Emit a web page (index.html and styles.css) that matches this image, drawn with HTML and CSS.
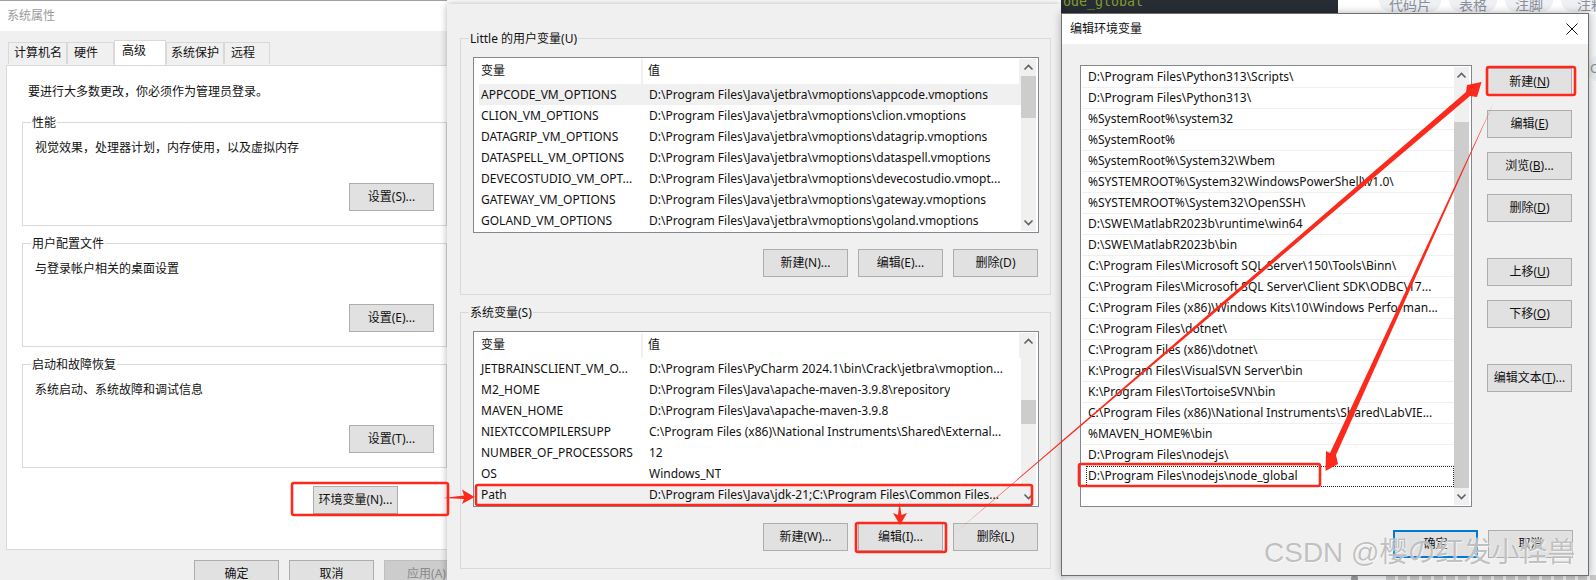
FILE: index.html
```html
<!DOCTYPE html>
<html lang="zh-CN">
<head>
<meta charset="utf-8">
<title>编辑环境变量</title>
<link rel="stylesheet" href="styles.css">
</head>
<body>
<div class="desktop">

  <div class="backdrop">
    <div class="bd-top">
      <div class="code"><span class="code-text">ode_global</span></div>
      <div class="bd-tools">
        <span class="chip c1">代码片</span>
        <span class="chip c2">表格</span>
        <span class="chip c2">注脚</span>
        <span class="chip c3">注释</span>
      </div>
    </div>
    <span class="side-chip">O</span>
    <div class="bd-bottom"><span class="dot"></span><span class="faint"></span></div>
  </div>

  <section class="window win-sys">
    <div class="titlebar inactive">系统属性</div>
    <div class="tabs">
      <span class="tab t1">计算机名</span>
      <span class="tab t2">硬件</span>
      <span class="tab t3 active">高级</span>
      <span class="tab t4">系统保护</span>
      <span class="tab t5">远程</span>
    </div>
    <div class="panel">
      <p class="note">要进行大多数更改，你必须作为管理员登录。</p>
      <div class="group">
        <span class="legend">性能</span>
        <p class="desc">视觉效果，处理器计划，内存使用，以及虚拟内存</p>
        <button class="btn group-btn">设置(S)...</button>
      </div>
      <div class="group">
        <span class="legend">用户配置文件</span>
        <p class="desc">与登录帐户相关的桌面设置</p>
        <button class="btn group-btn">设置(E)...</button>
      </div>
      <div class="group">
        <span class="legend">启动和故障恢复</span>
        <p class="desc">系统启动、系统故障和调试信息</p>
        <button class="btn group-btn">设置(T)...</button>
      </div>
      <button class="btn env-btn">环境变量(N)...</button>
    </div>
    <div class="sys-footer">
      <button class="btn">确定</button>
      <button class="btn">取消</button>
      <button class="btn disabled">应用(A)</button>
    </div>
  </section>

  <section class="window win-env">
    <div class="vgroup">
      <span class="vlegend">Little 的用户变量(U)</span>
      <div class="vlist">
        <div class="vtable">
          <div class="vhead"><span class="vh1">变量</span><span class="vh2">值</span></div>
          <div class="vrow selected"><span class="vname">APPCODE_VM_OPTIONS</span><span class="vval">D:\Program Files\Java\jetbra\vmoptions\appcode.vmoptions</span></div>
          <div class="vrow"><span class="vname">CLION_VM_OPTIONS</span><span class="vval">D:\Program Files\Java\jetbra\vmoptions\clion.vmoptions</span></div>
          <div class="vrow"><span class="vname">DATAGRIP_VM_OPTIONS</span><span class="vval">D:\Program Files\Java\jetbra\vmoptions\datagrip.vmoptions</span></div>
          <div class="vrow"><span class="vname">DATASPELL_VM_OPTIONS</span><span class="vval">D:\Program Files\Java\jetbra\vmoptions\dataspell.vmoptions</span></div>
          <div class="vrow"><span class="vname">DEVECOSTUDIO_VM_OPT...</span><span class="vval">D:\Program Files\Java\jetbra\vmoptions\devecostudio.vmopt...</span></div>
          <div class="vrow"><span class="vname">GATEWAY_VM_OPTIONS</span><span class="vval">D:\Program Files\Java\jetbra\vmoptions\gateway.vmoptions</span></div>
          <div class="vrow"><span class="vname">GOLAND_VM_OPTIONS</span><span class="vval">D:\Program Files\Java\jetbra\vmoptions\goland.vmoptions</span></div>
        </div>
        <div class="sbar">
          <svg class="chev" viewBox="0 0 15 17"><path d="M3.5 10.5 7.5 6.5 11.5 10.5"/></svg>
          <div class="thumb th-user"></div>
          <svg class="chev chev-end" viewBox="0 0 15 17"><path d="M3.5 6.5 7.5 10.5 11.5 6.5"/></svg>
        </div>
      </div>
      <div class="vbtns">
        <button class="btn">新建(N)...</button>
        <button class="btn">编辑(E)...</button>
        <button class="btn">删除(D)</button>
      </div>
    </div>

    <div class="vgroup">
      <span class="vlegend">系统变量(S)</span>
      <div class="vlist">
        <div class="vtable">
          <div class="vhead"><span class="vh1">变量</span><span class="vh2">值</span></div>
          <div class="vrow"><span class="vname">JETBRAINSCLIENT_VM_O...</span><span class="vval">D:\Program Files\PyCharm 2024.1\bin\Crack\jetbra\vmoption...</span></div>
          <div class="vrow"><span class="vname">M2_HOME</span><span class="vval">D:\Program Files\Java\apache-maven-3.9.8\repository</span></div>
          <div class="vrow"><span class="vname">MAVEN_HOME</span><span class="vval">D:\Program Files\Java\apache-maven-3.9.8</span></div>
          <div class="vrow"><span class="vname">NIEXTCCOMPILERSUPP</span><span class="vval">C:\Program Files (x86)\National Instruments\Shared\External...</span></div>
          <div class="vrow"><span class="vname">NUMBER_OF_PROCESSORS</span><span class="vval">12</span></div>
          <div class="vrow"><span class="vname">OS</span><span class="vval">Windows_NT</span></div>
          <div class="vrow selected"><span class="vname">Path</span><span class="vval">D:\Program Files\Java\jdk-21;C:\Program Files\Common Files...</span></div>
        </div>
        <div class="sbar">
          <svg class="chev" viewBox="0 0 15 17"><path d="M3.5 10.5 7.5 6.5 11.5 10.5"/></svg>
          <div class="thumb th-sys"></div>
          <svg class="chev chev-end" viewBox="0 0 15 17"><path d="M3.5 6.5 7.5 10.5 11.5 6.5"/></svg>
        </div>
      </div>
      <div class="vbtns">
        <button class="btn">新建(W)...</button>
        <button class="btn">编辑(I)...</button>
        <button class="btn">删除(L)</button>
      </div>
    </div>
  </section>

  <section class="window win-edit">
    <div class="titlebar edit-title">
      <span>编辑环境变量</span>
      <svg class="close" viewBox="0 0 12 12"><path d="M.5 .5 11.5 11.5M11.5 .5 .5 11.5"/></svg>
    </div>
    <div class="edit-body">
      <div class="plist">
        <div class="prows">
          <div class="prow">D:\Program Files\Python313\Scripts\</div>
          <div class="prow">D:\Program Files\Python313\</div>
          <div class="prow">%SystemRoot%\system32</div>
          <div class="prow">%SystemRoot%</div>
          <div class="prow">%SystemRoot%\System32\Wbem</div>
          <div class="prow">%SYSTEMROOT%\System32\WindowsPowerShell\v1.0\</div>
          <div class="prow">%SYSTEMROOT%\System32\OpenSSH\</div>
          <div class="prow">D:\SWE\MatlabR2023b\runtime\win64</div>
          <div class="prow">D:\SWE\MatlabR2023b\bin</div>
          <div class="prow">C:\Program Files\Microsoft SQL Server\150\Tools\Binn\</div>
          <div class="prow">C:\Program Files\Microsoft SQL Server\Client SDK\ODBC\17...</div>
          <div class="prow">C:\Program Files (x86)\Windows Kits\10\Windows Performan...</div>
          <div class="prow">C:\Program Files\dotnet\</div>
          <div class="prow">C:\Program Files (x86)\dotnet\</div>
          <div class="prow">K:\Program Files\VisualSVN Server\bin</div>
          <div class="prow">K:\Program Files\TortoiseSVN\bin</div>
          <div class="prow">C:\Program Files (x86)\National Instruments\Shared\LabVIE...</div>
          <div class="prow">%MAVEN_HOME%\bin</div>
          <div class="prow">D:\Program Files\nodejs\</div>
          <div class="prow focus">D:\Program Files\nodejs\node_global</div>
        </div>
        <div class="sbar">
          <svg class="chev" viewBox="0 0 15 17"><path d="M3.5 10.5 7.5 6.5 11.5 10.5"/></svg>
          <div class="thumb th-path"></div>
          <svg class="chev chev-end" viewBox="0 0 15 17"><path d="M3.5 6.5 7.5 10.5 11.5 6.5"/></svg>
        </div>
      </div>
      <div class="edit-btns">
        <button class="btn">新建(<u>N</u>)</button>
        <button class="btn">编辑(<u>E</u>)</button>
        <button class="btn">浏览(<u>B</u>)...</button>
        <button class="btn">删除(<u>D</u>)</button>
        <button class="btn spaced">上移(<u>U</u>)</button>
        <button class="btn">下移(<u>O</u>)</button>
        <button class="btn spaced">编辑文本(<u>T</u>)...</button>
      </div>
    </div>
    <div class="edit-footer">
      <button class="btn default">确定</button>
      <button class="btn">取消</button>
    </div>
  </section>

  <svg class="marks" viewBox="0 0 1596 580" width="1596" height="580">
    <g class="box">
      <rect x="292" y="483" width="156" height="32" rx="2"/>
      <rect x="476" y="485" width="556" height="20" rx="2"/>
      <rect x="856" y="523" width="90" height="29" rx="2"/>
      <rect x="1487" y="67" width="88" height="28" rx="2"/>
      <rect x="1079" y="464" width="241" height="22" rx="2"/>
    </g>
    <g class="arrow">
      <polygon points="443,498 464,495.5 462,489.5 474.5,497 462,504 464,499"/>
      <polygon points="899.5,502 901.5,515 907,513 900,525 893,513 898,515"/>
      <polygon points="955,533 1466,92 1467,85 1481.5,82 1477,97 1470,96"/>
      <polygon points="1494,102 1336,455 1338,464 1325.5,471 1326,451 1330,453"/>
    </g>
  </svg>

  <div class="watermark">CSDN @樱の红发小怪兽</div>
</div>
</body>
</html>
```

FILE: styles.css
```css
* { box-sizing: border-box; }

html, body {
  margin: 0;
  padding: 0;
  background: #fff;
}

body {
  font-family: "Noto Sans", "Noto Sans CJK SC", sans-serif;
  font-size: 12px;
  line-height: 18px;
  color: #111;
}

p { margin: 0; }

.desktop {
  position: relative;
  width: 1596px;
  height: 580px;
  overflow: hidden;
}

/* blog editor behind the dialogs */
.backdrop {
  position: absolute;
  left: 1061px;
  top: 0;
  right: 0;
  bottom: 0;
  background: #f5f6f7;
  display: flex;
  flex-direction: column;
  justify-content: space-between;
}
.bd-top { display: flex; height: 14px; }
.code {
  width: 277px;
  background: #282c34;
  overflow: hidden;
  padding-left: 2px;
}
.code-text {
  display: block;
  margin-top: -7px;
  font-family: "DejaVu Sans Mono", monospace;
  font-size: 13.3px;
  line-height: 18px;
  color: #7f9e2e;
}
.bd-tools {
  flex: 1;
  display: flex;
  gap: 8px;
  background: #fff;
  margin-left: 0;
  padding-left: 41px;
  overflow: hidden;
}
.chip {
  flex: none;
  height: 24px;
  margin-top: -12px;
  border-radius: 12px;
  background: #eef0f4;
  color: #8a8f99;
  font-size: 14px;
  line-height: 34px;
  text-align: center;
}
.c1 { width: 62px; }
.c2 { width: 48px; }
.c3 { width: 60px; }
.side-chip {
  position: absolute;
  left: 527px;
  top: 55px;
  width: 30px;
  height: 27px;
  border-radius: 12px 0 0 12px;
  background: #e9ecf1;
  color: #8a8f99;
  font-size: 13px;
  line-height: 27px;
  padding-left: 2px;
}
.bd-bottom {
  height: 5px;
  display: flex;
  align-items: flex-start;
  padding-left: 290px;
}
.dot {
  width: 7px;
  height: 7px;
  border-radius: 50%;
  background: #9a9a9a;
  margin-top: 0;
}
.faint {
  width: 211px;
  height: 5px;
  margin-left: 28px;
  background: repeating-linear-gradient(90deg, #c9c9c9 0 9px, #eeeeee 9px 12px);
}

/* windows */
.window {
  position: absolute;
  background: #f0f0f0;
}
.titlebar {
  background: #fff;
  height: 30px;
  line-height: 30px;
}
.inactive {
  color: #9b9b9b;
  padding-left: 7px;
}

/* system properties */
.win-sys {
  left: 0;
  top: 0;
  width: 447px;
  height: 580px;
  overflow: hidden;
  border-top: 1px solid #a0a0a0;
}
.tabs {
  display: flex;
  align-items: flex-end;
  height: 34px;
  padding-left: 8px;
  position: relative;
  z-index: 1;
}
.tab {
  height: 22px;
  margin-bottom: 1px;
  border: 1px solid #d9d9d9;
  border-bottom: 0;
  line-height: 20px;
  background: #f0f0f0;
}
.tab.active {
  height: 25px;
  margin-bottom: 0;
  background: #fff;
  line-height: 20px;
}
.t1 { width: 59px; padding-left: 5px; }
.t2 { width: 47px; padding-left: 6px; }
.t3 { width: 52px; padding-left: 7px; }
.t4 { width: 58px; padding-left: 4px; }
.t5 { width: 46px; padding-left: 6px; }

.panel {
  margin-left: 6px;
  height: 485px;
  background: #fff;
  border: 1px solid #d9d9d9;
  border-right: 0;
  display: flex;
  flex-direction: column;
  align-items: flex-start;
  padding: 17px 0 0 15px;
}
.note {
  margin-left: 6px;
  height: 18px;
  margin-bottom: 21px;
}
.group {
  width: 425px;
  height: 104px;
  margin-bottom: 17px;
  border: 1px solid #d9d9d9;
  display: flex;
  flex-direction: column;
  align-items: flex-start;
  padding: 0 12px 14px 0;
}
.legend {
  margin: -9px 0 0 8px;
  padding: 0 1px;
  background: #fff;
}
.desc {
  margin: 7px 0 0 12px;
}
.group-btn { margin-top: auto; align-self: flex-end; }
.env-btn {
  width: 147px;
  height: 28px;
  margin: 1px 0 0 291px;
}
.sys-footer {
  display: flex;
  gap: 10px;
  padding-left: 194px;
  margin-top: 10px;
}

/* buttons */
.btn {
  flex: none;
  width: 85px;
  height: 28px;
  padding: 0;
  border: 1px solid #adadad;
  background: #e1e1e1;
  font: inherit;
  color: #111;
  text-align: center;
}
.btn u { text-underline-offset: 1px; }
.btn.disabled {
  background: #cccccc;
  border-color: #bfbfbf;
  color: #8a8a8a;
}
.btn.default {
  border: 2px solid #0078d7;
}

/* environment variables */
.win-env {
  left: 447px;
  top: 4px;
  width: 614px;
  height: 576px;
  padding: 34px 0 0 13px;
  box-shadow: 0 0 7px rgba(0, 0, 0, .3);
}
.vgroup {
  width: 591px;
  height: 257px;
  margin-bottom: 17px;
  border: 1px solid #d9d9d9;
  display: flex;
  flex-direction: column;
  align-items: flex-start;
}
.vlegend {
  margin: -9px 0 0 8px;
  padding: 0 1px;
  background: #f0f0f0;
}
.vlist {
  width: 566px;
  height: 176px;
  margin: 9px 0 0 12px;
  background: #fff;
  border: 1px solid #828790;
  display: flex;
  padding: 1px 2px 1px 5px;
}
.vtable { flex: 1; min-width: 0; }
.vhead {
  height: 25px;
  display: flex;
  line-height: 24px;
}
.vh1 {
  width: 164px;
  padding-left: 2px;
  border-right: 2px solid #f0f0f0;
}
.vh2 {
  flex: 1;
  padding-left: 5px;
  border-right: 2px solid #f0f0f0;
}
.vrow {
  height: 21px;
  display: flex;
  line-height: 21px;
  white-space: nowrap;
}
.vrow.selected { background: #f0f0f0; }
.vname {
  width: 168px;
  padding-left: 2px;
  flex: none;
  overflow: hidden;
}
.vval { padding-left: 2px; overflow: hidden; }
.vbtns {
  align-self: flex-end;
  display: flex;
  gap: 10px;
  margin: 16px 12px 0 0;
}

/* scrollbars */
.sbar {
  flex: none;
  width: 15px;
  background: #f0f0f0;
  display: flex;
  flex-direction: column;
}
.chev {
  display: block;
  flex: none;
  width: 15px;
  height: 17px;
}
.chev path {
  fill: none;
  stroke: #606060;
  stroke-width: 1.6;
}
.chev-end { margin-top: auto; }
.thumb { background: #cdcdcd; }
.th-user { margin-top: 0; height: 42px; }
.th-sys { margin-top: 50px; height: 24px; }
.th-path { margin-top: 38px; height: 367px; }

/* edit environment variable */
.win-edit {
  left: 1061px;
  top: 13px;
  width: 528px;
  height: 563px;
  border: 1px solid #6f6f6f;
  box-shadow: 0 0 8px rgba(0, 0, 0, .3);
}
.edit-title {
  display: flex;
  align-items: center;
  justify-content: space-between;
  padding: 0 10px 0 8px;
}
.close {
  width: 12px;
  height: 12px;
}
.close path {
  fill: none;
  stroke: #111;
  stroke-width: 1;
}
.edit-body {
  display: flex;
  align-items: flex-start;
  padding: 21px 0 0 18px;
}
.plist {
  width: 392px;
  height: 442px;
  flex: none;
  background: #fff;
  border: 1px solid #828790;
  display: flex;
  padding: 1px 2px 1px 1px;
}
.prows { flex: 1; min-width: 0; }
.prow {
  height: 21px;
  line-height: 20px;
  padding-left: 6px;
  border-bottom: 1px solid #f0f0f0;
  white-space: nowrap;
  overflow: hidden;
}
.prow.focus {
  margin-left: 4px;
  padding-left: 2px;
  outline: 1px dotted #222;
  outline-offset: -1px;
}
.edit-btns {
  display: flex;
  flex-direction: column;
  gap: 14px;
  margin: 3px 0 0 15px;
}
.btn.spaced { margin-top: 22px; }
.edit-footer {
  display: flex;
  justify-content: flex-end;
  gap: 10px;
  margin-top: 23px;
  padding-right: 15px;
}

/* annotations */
.marks {
  position: absolute;
  left: 0;
  top: 0;
  pointer-events: none;
}
.box rect {
  fill: none;
  stroke: #fb2a1c;
  stroke-width: 2.6;
}
.arrow polygon { fill: #fb2a1c; }

.watermark {
  position: absolute;
  left: 1264px;
  top: 536px;
  font-family: "Liberation Sans", "Noto Sans CJK SC", sans-serif;
  font-size: 28px;
  line-height: 34px;
  white-space: nowrap;
  color: rgba(140, 140, 140, .55);
  text-shadow: 0 0 1px rgba(255, 255, 255, .9), 1px 1px 1px rgba(255, 255, 255, .6);
}
```
